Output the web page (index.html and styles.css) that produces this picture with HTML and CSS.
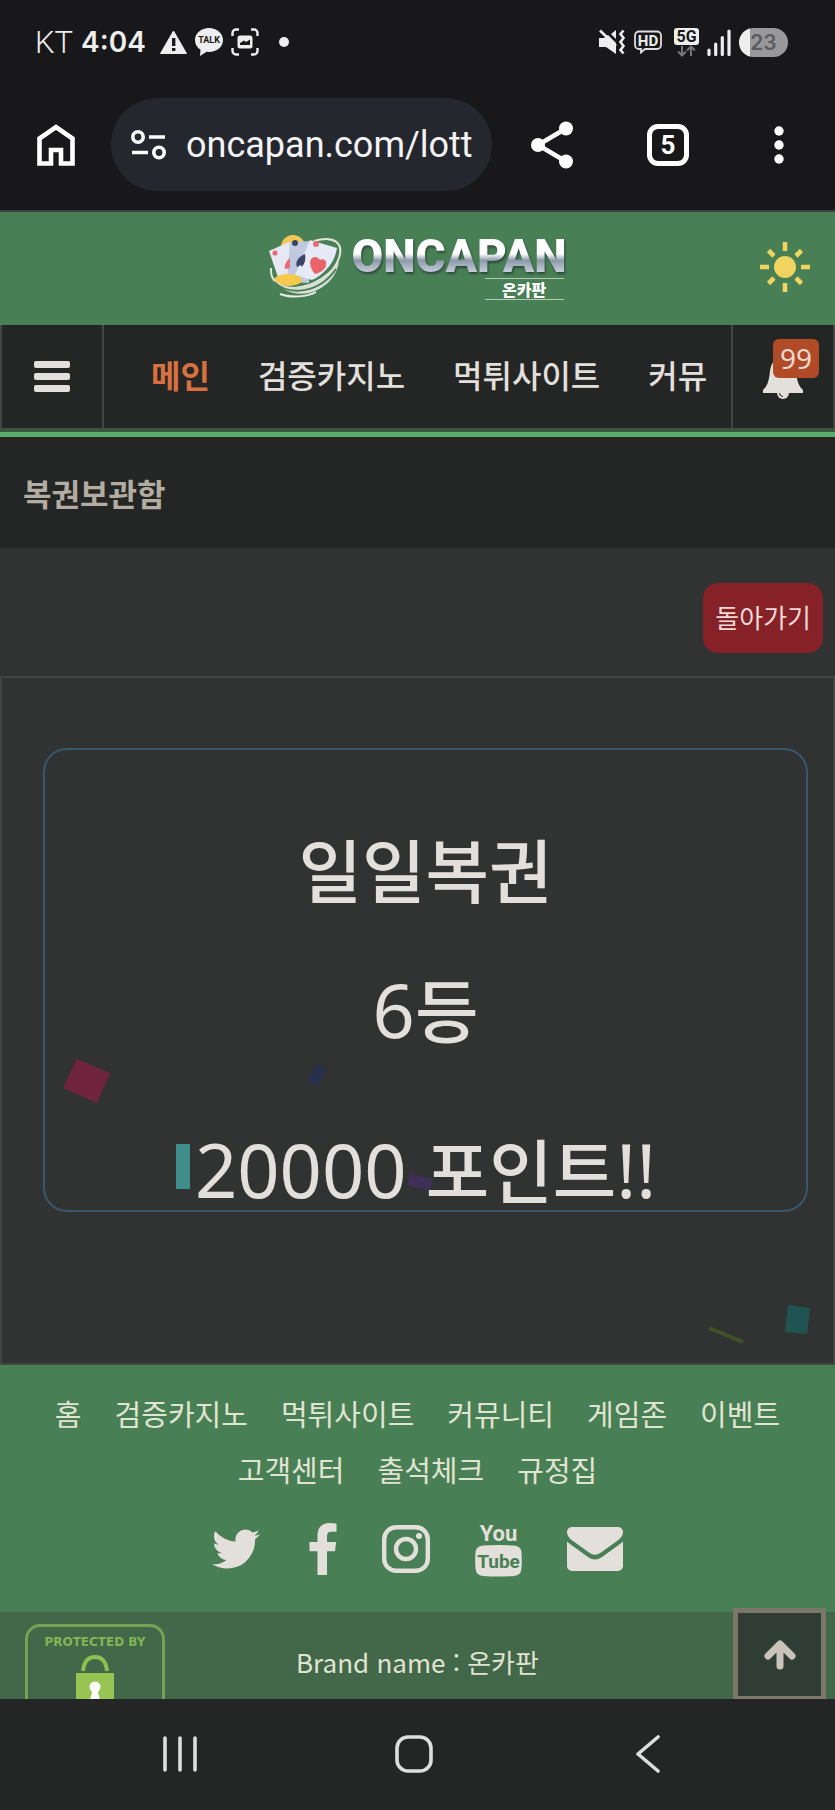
FILE: index.html
```html
<!DOCTYPE html>
<html lang="ko">
<head>
    <meta charset="UTF-8">
    <meta name="viewport" content="width=device-width, initial-scale=1.0">
    <title>복권보관함 - 온카판</title>
    <link rel="stylesheet" href="styles.css">
</head>
<body>
    <div class="status-bar">
        <div class="status-left">
            <span class="carrier">KT</span>
            <span class="clock">4:04</span>
            <svg class="st-warn" width="27" height="24" viewBox="0 0 27 24">
                <path d="M13.500 1L26.500 23.500H.5z" fill="#eee" stroke="#eee" stroke-linejoin="round"/>
                <path d="M12 8h3.400v8H12zM12 18h3.400v3H12z" fill="#18181a"/>
            </svg>
            <svg class="st-talk" width="28" height="28" viewBox="0 0 28 28">
                <path d="M14 0C6.300 0 0 5 0 12c0 4.500 2.300 7.800 5.500 9.800L5 28l6.500-4.200c10 .8 16.500-4.600 16.500-11.800C28 5 21.700 0 14 0z" fill="#eee"/>
                <text x="14" y="15" class="talk-text">TALK</text>
            </svg>
            <svg width="28" height="28" viewBox="0 0 28 28">
                <path d="M1.500 8V5a3.500 3.500 0 0 1 3.500-3.500h3M20 1.500h3A3.500 3.500 0 0 1 26.500 5v3M26.500 20v3a3.500 3.500 0 0 1-3.500 3.500h-3M8 26.500H5A3.500 3.500 0 0 1 1.500 23v-3" fill="none" stroke="#eee" stroke-width="2.400"/>
                <rect x="6.500" y="7.500" width="15" height="13" rx="2.500" fill="#eee"/>
                <path d="M9 17v-2l4-2.500 2 1.500 4-2.500V17z" fill="#18181a"/>
            </svg>
            <span class="dot"></span>
        </div>
        <div class="status-right">
            <svg width="28" height="26" viewBox="0 0 28 26">
                <path d="M1 9h5l4-3 8 8v11L8 18H1zM13 5l5-4v9z" fill="#eee"/>
                <path d="M2 1.500L18 17" stroke="#eee" stroke-width="2.600"/>
                <path d="M25.500 1.500l-3 3.500 3 4-3 4 3 4-3 4 3 3.500" fill="none" stroke="#eee" stroke-width="2.600"/>
            </svg>
            <svg width="28" height="24" viewBox="0 0 28 24">
                <path d="M5 1.500h18a4 4 0 0 1 4 4V15a4 4 0 0 1-4 4H11l-4 3.500V19H5a4 4 0 0 1-4-4V5.500a4 4 0 0 1 4-4z" fill="none" stroke="#ddd" stroke-width="1.800"/>
                <text x="14" y="16" class="hd-text">HD</text>
            </svg>
            <svg class="st-5g" width="25" height="29" viewBox="0 0 25 29">
                <rect width="25" height="17" rx="3" fill="#eee"/>
                <text x="12.500" y="14" class="net-text">5G</text>
                <path d="M8 18v9M4 23.500l4 4 4-4M17 28v-9M13 22.500l4-4 4 4" fill="none" stroke="#77777a" stroke-width="2"/>
            </svg>
            <svg width="24" height="27" viewBox="0 0 24 27">
                <path d="M2 21v4.500M8.700 15v10.500M15.300 8.500v17M22 2v23.500" stroke="#eee" stroke-width="3.200" stroke-linecap="round"/>
            </svg>
            <span class="battery">23</span>
        </div>
    </div>

    <div class="browser-bar">
        <button class="bar-btn" aria-label="홈">
            <svg width="38" height="42" viewBox="0 0 38 42">
                <path d="M2.500 39.500V14.500L19 3l16.500 11.500v25H24V26H14v13.500z" fill="none" stroke="#fff" stroke-width="4.600"/>
            </svg>
        </button>
        <div class="url-pill">
            <svg width="35" height="30" viewBox="0 0 35 30">
                <g fill="none" stroke="#fff" stroke-width="3.600">
                    <circle cx="7" cy="7" r="5.200"/>
                    <circle cx="28" cy="22.500" r="5.200"/>
                    <path d="M18 7h16M1 22.500h16"/>
                </g>
            </svg>
            <input class="url-input" type="text" value="oncapan.com/lotto" aria-label="주소">
        </div>
        <button class="bar-btn share" aria-label="공유">
            <svg width="42" height="48" viewBox="0 0 42 48">
                <path d="M35 7.500L7 24l28 16.500" fill="none" stroke="#fff" stroke-width="4.600"/>
                <g fill="#fff"><circle cx="35" cy="7.500" r="7"/><circle cx="7" cy="24" r="7"/><circle cx="35" cy="40.500" r="7"/></g>
            </svg>
        </button>
        <button class="bar-btn tabs" aria-label="탭">5</button>
        <button class="bar-btn more" aria-label="메뉴">
            <svg width="10" height="38" viewBox="0 0 10 38" fill="#fff">
                <circle cx="5" cy="5" r="4.700"/><circle cx="5" cy="19" r="4.700"/><circle cx="5" cy="33" r="4.700"/>
            </svg>
        </button>
    </div>

    <header class="site-header">
        <a class="logo" href="#">
            <svg width="74" height="66" viewBox="0 0 74 66">
                <path d="M46 7C66 1 76 9 71 24 66 40 45 53 26 54 11 54 2 47 3 34" fill="none" stroke="#e4e6dc" stroke-width="2"/>
                <circle cx="25" cy="13" r="12" fill="#f4c856"/>
                <path d="M1 17l20-9 14 34-22 10z" fill="#e6e9f4"/>
                <path d="M22 8l22-1-3 42-22-1z" fill="#bfc9df"/>
                <path d="M42 6l27 8c-2 14-12 26-25 32l-17-5z" fill="#e6e9f6"/>
                <circle cx="7" cy="19" r="2.500" fill="#e96a72"/>
                <circle cx="27" cy="9" r="3" fill="#3c4468"/>
                <circle cx="48" cy="10" r="3" fill="#e96a72"/>
                <path d="M22 24c-4 3-6 8-5 11l5-1z" fill="#e96a72"/>
                <path d="M37 20c-7 3-10 8-8 13l4-2 1 2c3-4 4-8 3-13z" fill="#3c4468"/>
                <path d="M44 24c3-2 6-1 8 2 4-2 7 1 6 5 0 4-6 8-11 9-4-4-7-13-3-16z" fill="#ec6469"/>
                <ellipse cx="20" cy="46" rx="14" ry="6" fill="#f4c94c"/>
                <path d="M3 40c7 14 22 16 37 11 15-5 26-14 31-24-2 17-15 28-30 32-16 3-31-3-38-19z" fill="#d9ded6"/>
                <path d="M6 48c14 14 45 12 62-13" fill="none" stroke="#487f54" stroke-width="2"/>
                <path d="M12 60c10 4 28 3 36-2" fill="none" stroke="#e9ebe4" stroke-width="2"/>
            </svg>
            <span class="logo-words">
                <span class="logo-name">ONCAPAN</span>
                <span class="logo-sub">온카판</span>
            </span>
        </a>
        <button class="theme-btn" aria-label="라이트 모드">
            <svg width="50" height="50" viewBox="0 0 50 50">
                <circle cx="25" cy="25" r="11" fill="#efd45f"/>
                <path d="M25 0v9M25 41v9M0 25h9M41 25h9M8.500 8.500l5.500 5.500M36 36l5.500 5.500M41.500 8.500L36 14M14 36l-5.500 5.500" stroke="#efd45f" stroke-width="4.600"/>
            </svg>
        </button>
    </header>

    <nav class="main-nav">
        <button class="nav-cell menu-btn" aria-label="전체메뉴"><span></span><span></span><span></span></button>
        <div class="nav-links">
            <a class="active" href="#">메인</a>
            <a href="#">검증카지노</a>
            <a href="#">먹튀사이트</a>
            <a href="#">커뮤니티</a>
        </div>
        <button class="nav-cell bell-btn" aria-label="알림">
            <svg width="40" height="44" viewBox="0 0 40 44">
                <path d="M20 0c2 0 3 1 3 3 6 1 9 6 10 13 1 11 3 15 7 19v3H0v-3c4-4 6-8 7-19C8 9 11 4 17 3c0-2 1-3 3-3z" fill="#e3dfda"/>
                <circle cx="20" cy="38" r="6" fill="#e3dfda"/>
                <path d="M16.500 38q0 3.500 3.500 3.500" fill="none" stroke="#242625"/>
            </svg>
            <span class="badge">99</span>
        </button>
    </nav>

    <h1 class="page-title">복권보관함</h1>

    <main class="content">
        <div class="toolbar">
            <button class="back-btn">돌아가기</button>
        </div>
        <section class="panel">
            <svg class="confetti" viewBox="0 0 831 685">
                <path d="M75 381l33 14-13 30-34-15z" fill="#71243d"/>
                <path d="M316 386l8 6-8 16-11-7z" fill="#28304f"/>
                <path d="M174 466h14v45h-14z" fill="#3f8e8b"/>
                <path d="M408 496l23 5-3 12-23-6z" fill="#3f3058"/>
                <path d="M786 627l22 3-3 26-22-2z" fill="#205452"/>
                <path d="M707 650l34 14" stroke="#3f5228" stroke-width="4"/>
            </svg>
            <div class="prize-card">
                <p>일일복권</p>
                <p><span class="num">6</span>등</p>
                <p class="point"><span class="num">20000 </span>포인트<span class="num">!!</span></p>
            </div>
        </section>
    </main>

    <footer class="site-footer">
        <div class="footer-links">
            <a href="#">홈</a>
            <a href="#">검증카지노</a>
            <a href="#">먹튀사이트</a>
            <a href="#">커뮤니티</a>
            <a href="#">게임존</a>
            <a href="#">이벤트</a>
            <a href="#">고객센터</a>
            <a href="#">출석체크</a>
            <a href="#">규정집</a>
        </div>
        <div class="social">
            <a class="twitter" href="#" aria-label="Twitter">
                <svg width="48" height="40" viewBox="108 256 1576 1280" fill="#e3dfda">
                    <path d="M1684 408q-67 98-162 167 1 14 1 42 0 130-38 259.500t-115.500 248.500-184.500 210.500-258 146-323 54.500q-271 0-496-145 35 4 78 4 225 0 401-138-105-2-188-64.500t-114-159.500q33 5 61 5 43 0 85-11-112-23-185.500-111.500t-73.500-205.500v-4q68 38 146 41-66-44-105-115t-39-154q0-88 44-163 121 149 294.500 238.500t371.500 99.500q-8-38-8-74 0-134 94.500-228.500t228.500-94.500q140 0 236 102 109-21 205-78-37 115-142 178 93-10 186-50z"/>
                </svg>
            </a>
            <a href="#" aria-label="Facebook">
                <svg width="28" height="52" viewBox="479 0 864 1664" fill="#e3dfda">
                    <path d="M1343 12v264h-157q-86 0-116 36t-30 108v189h293l-39 296h-254v759h-306v-759h-255v-296h255v-218q0-186 104-288.500t277-102.500q147 0 228 12z"/>
                </svg>
            </a>
            <a href="#" aria-label="Instagram">
                <svg width="48" height="48" viewBox="0 0 48 48">
                    <rect x="2.200" y="2.200" width="43.600" height="43.600" rx="12" fill="none" stroke="#e3dfda" stroke-width="4.400"/>
                    <circle cx="24" cy="24" r="10" fill="none" stroke="#e3dfda" stroke-width="4.400"/>
                    <circle cx="37" cy="11" r="3" fill="#e3dfda"/>
                </svg>
            </a>
            <a href="#" aria-label="YouTube">
                <svg width="47" height="56" viewBox="0 0 47 56">
                    <text x="23.500" y="20" class="yt-you">You</text>
                    <path d="M8 24.500q15.500-1 31 0 7 .5 7.500 7 .6 8 0 16-.5 7-7.500 7.500-15.500 1-31 0-7-.5-7.500-7.500-.6-8 0-16 .5-6.500 7.500-7z" fill="#e3dfda"/>
                    <text x="23.500" y="47" class="yt-tube">Tube</text>
                </svg>
            </a>
            <a href="#" aria-label="E-mail">
                <svg width="56" height="44" viewBox="0 0 56 44" fill="#e3dfda">
                    <path d="M5 0h46a5 5 0 0 1 5 5c0 4-3 7-6 9L34 25.500q-6 4.500-12 0L6 14C3 12 0 9 0 5a5 5 0 0 1 5-5z"/>
                    <path d="M0 14.500q2 2 4 3.300L21 30q7 5 14 0l17-12.200q2-1.300 4-3.300V39a5 5 0 0 1-5 5H5a5 5 0 0 1-5-5z"/>
                </svg>
            </a>
        </div>
        <div class="footer-bottom">
            <div class="protect">
                <span>PROTECTED BY</span>
                <svg width="38" height="56" viewBox="0 0 38 56">
                    <path d="M7 16C8 6 13 2 19 2s11 4 12 14" fill="none" stroke="#8cc152" stroke-width="4"/>
                    <rect y="18" width="38" height="36" fill="#97c453"/>
                    <circle cx="19" cy="32" r="5.500" fill="#fff"/>
                    <path d="M17 34h4l4 14H13z" fill="#fff"/>
                </svg>
            </div>
            <p class="brand">Brand name : 온카판</p>
            <button class="top-btn" aria-label="맨 위로">
                <svg width="32" height="30" viewBox="0 0 32 30">
                    <path d="M16 26V6M4 16L16 4l12 12" fill="none" stroke="#c9c3ba" stroke-width="7" stroke-linecap="round" stroke-linejoin="round"/>
                </svg>
            </button>
        </div>
    </footer>

    <div class="system-nav">
        <button aria-label="최근 앱">
            <svg width="34" height="36" viewBox="0 0 34 36"><path d="M2 2v32M17 2v32M32 2v32" stroke="#dedede" stroke-width="3.600" stroke-linecap="round"/></svg>
        </button>
        <button aria-label="홈 화면">
            <svg width="38" height="38" viewBox="0 0 38 38"><rect x="2" y="2" width="34" height="34" rx="11" fill="none" stroke="#dedede" stroke-width="3.600"/></svg>
        </button>
        <button aria-label="뒤로">
            <svg width="24" height="38" viewBox="0 0 24 38"><path d="M22 2L2 19l20 17" fill="none" stroke="#dedede" stroke-width="3.600" stroke-linecap="round" stroke-linejoin="round"/></svg>
        </button>
    </div>
</body>
</html>
```
FILE: styles.css
```css
* {
    box-sizing: border-box;
}
body {
    margin: 0;
    background-color: #313332;
    color: #e3dfda;
    font-family: "Noto Sans CJK KR", sans-serif;
}
a {
    color: inherit;
    text-decoration: none;
}
button {
    border: none;
    padding: 0;
    background: none;
    color: inherit;
    font-family: inherit;
    cursor: pointer;
}
svg {
    display: block;
    flex-shrink: 0;
}

/* phone status bar */
.status-bar {
    display: flex;
    justify-content: space-between;
    align-items: center;
    height: 84px;
    padding: 0 47px 0 35px;
    background-color: #18181a;
    color: #eee;
}
.status-left,
.status-right {
    display: flex;
    align-items: center;
    gap: 8px;
}
.carrier {
    font: 300 31px Roboto, sans-serif;
}
.clock {
    font: 600 28px Inter, sans-serif;
}
.st-warn {
    margin-left: 6px;
}
.talk-text {
    font: bold 9px Roboto, sans-serif;
    text-anchor: middle;
    fill: #18181a;
}
.hd-text {
    font: bold 15px Roboto, sans-serif;
    text-anchor: middle;
    fill: #eee;
}
.net-text {
    font: bold 16px Roboto, sans-serif;
    text-anchor: middle;
    fill: #18181a;
}
.st-5g {
    margin-left: 4px;
}
.dot {
    width: 10px;
    height: 10px;
    margin-left: 12px;
    border-radius: 50%;
    background-color: #eee;
}
.battery {
    width: 49px;
    border-radius: 15px;
    background: linear-gradient(to right, #eee 11px, #99999b 11px);
    color: #5c5c5e;
    font: 600 21px/29px Inter, sans-serif;
    text-align: center;
}

/* browser address bar */
.browser-bar {
    display: flex;
    align-items: center;
    height: 128px;
    padding: 0 51px 5px 37px;
    border-bottom: 2px solid #3d4240;
    background-color: #18181a;
    color: #fff;
}
.url-pill {
    display: flex;
    flex: 1;
    align-items: center;
    gap: 20px;
    min-width: 0;
    height: 93px;
    margin-left: 36px;
    padding: 0 19px 0 20px;
    border-radius: 47px;
    background-color: #24272e;
}
.url-input {
    flex: 1;
    min-width: 0;
    padding: 0;
    border: none;
    background: none;
    color: #f4f4f6;
    font: 36px Roboto, sans-serif;
}
.share {
    margin-left: 39px;
}
.tabs {
    width: 42px;
    height: 42px;
    margin-left: 74px;
    border: 5px solid #fff;
    border-radius: 11px;
    color: #fff;
    font: bold 26px/32px Roboto, sans-serif;
}
.more {
    margin-left: 85px;
}

/* site header */
.site-header {
    display: grid;
    grid-template-columns: 1fr auto 1fr;
    align-items: center;
    height: 113px;
    padding: 0 25px 4px;
    background-color: #487f54;
}
.logo {
    display: flex;
    grid-column: 2;
    gap: 9px;
}
.logo-words {
    display: flex;
    flex-direction: column;
    align-items: flex-end;
}
.logo-name {
    background: linear-gradient(#fff 45%, #8d99ab 60%, #c3cad6 85%);
    -webkit-background-clip: text;
    background-clip: text;
    color: transparent;
    filter: drop-shadow(1px 2px 1px #2c4a3a);
    font: 900 46px/44px Roboto, sans-serif;
}
.logo-sub {
    width: 79px;
    margin-right: 3px;
    border-top: 1px solid #b5ccb8;
    border-bottom: 1px solid #b5ccb8;
    color: #fff;
    font-size: 16px;
    font-weight: 900;
    line-height: 20px;
    text-align: center;
}
.theme-btn {
    justify-self: end;
}

/* navigation */
.main-nav {
    display: flex;
    height: 112px;
    border-bottom: 5px solid #5cab6a;
    background-color: #242625;
    box-shadow: inset 0 -4px #3b5541;
}
.nav-cell {
    width: 104px;
    height: 103px;
    border: solid #434543;
    border-width: 0 2px;
}
.menu-btn {
    display: flex;
    flex-direction: column;
    align-items: center;
    justify-content: center;
    gap: 5px;
}
.menu-btn span {
    width: 36px;
    height: 7px;
    border-radius: 2px;
    background-color: #e3dfda;
}
.nav-links {
    display: flex;
    flex: 1;
    gap: 48px;
    min-width: 0;
    margin: 0 24px;
    padding-left: 23px;
    overflow: hidden;
    font-size: 32px;
    font-weight: 500;
    line-height: 99px;
    white-space: nowrap;
}
.active {
    color: #d7713f;
    font-weight: bold;
}
.bell-btn {
    display: flex;
    position: relative;
    align-items: center;
    justify-content: center;
}
.badge {
    position: absolute;
    top: 14px;
    right: 14px;
    width: 46px;
    border-radius: 6px;
    background-color: #b04a27;
    color: #f0d9cf;
    font: 28px/39px "Noto Sans", sans-serif;
    text-align: center;
}
.page-title {
    margin: 0;
    padding: 0 23px;
    background-color: #242625;
    color: #b3aca0;
    font-size: 31px;
    line-height: 111px;
}

/* lottery result */
.toolbar {
    display: flex;
    justify-content: flex-end;
    padding: 35px 12px 23px;
}
.back-btn {
    height: 70px;
    padding: 0 12px 4px;
    border-radius: 15px;
    background-color: #852127;
    color: #f6d8d6;
    font-size: 26px;
}
.panel {
    position: relative;
    padding: 70px 25px 151px 41px;
    border: 2px solid #434543;
}
.confetti {
    position: absolute;
    top: 0;
    left: 0;
    width: 100%;
}
.prize-card {
    position: relative;
    padding: 78px 0 2px;
    border: 2px solid #38566d;
    border-radius: 24px;
    font-size: 69px;
    font-weight: 500;
    line-height: 80px;
    text-align: center;
}
.prize-card p {
    margin: 0 0 60px;
}
.prize-card .point {
    margin: 80px 0 0;
}
.num {
    font-family: "Noto Sans", sans-serif;
    font-size: 74px;
    font-weight: 400;
    line-height: 0;
}

/* footer */
.site-footer {
    background-color: #487f54;
}
.footer-links {
    display: flex;
    flex-wrap: wrap;
    justify-content: center;
    column-gap: 33px;
    padding-top: 20px;
    color: #e0e4d3;
    font-size: 29px;
    line-height: 56px;
}
.social {
    display: flex;
    align-items: center;
    justify-content: center;
    gap: 45px;
    padding: 24px 0 35px;
}
.twitter {
    margin-right: 4px;
}
.yt-you,
.yt-tube {
    font: bold 22px Roboto, sans-serif;
    text-anchor: middle;
    fill: #e3dfda;
}
.yt-tube {
    font-size: 19px;
    fill: #487f54;
}
.footer-bottom {
    display: grid;
    position: relative;
    grid-template-columns: 140px 1fr 140px;
    height: 87px;
    padding: 0 25px;
    background-color: #426849;
}
.protect {
    display: flex;
    flex-direction: column;
    align-items: center;
    gap: 5px;
    height: 75px;
    margin-top: 12px;
    padding-top: 7px;
    overflow: hidden;
    border: 3px solid #74a353;
    border-bottom: none;
    border-radius: 15px 15px 0 0;
    color: #83b553;
    font: bold 12px/16px "DejaVu Sans", sans-serif;
    white-space: nowrap;
}
.brand {
    margin: 0;
    color: #e0e4d3;
    font-size: 26px;
    line-height: 99px;
    text-align: center;
}
.top-btn {
    display: flex;
    position: absolute;
    top: -4px;
    right: 9px;
    align-items: center;
    justify-content: center;
    width: 93px;
    height: 93px;
    border: 5px solid #7b7769;
    background-color: #303d34;
}

/* phone navigation buttons */
.system-nav {
    display: grid;
    position: relative;
    grid-template-columns: 1fr 1fr 1fr;
    height: 111px;
    padding: 0 70px 2px 63px;
    background-color: #242625;
}
.system-nav button {
    display: flex;
    align-items: center;
    justify-content: center;
}
```
